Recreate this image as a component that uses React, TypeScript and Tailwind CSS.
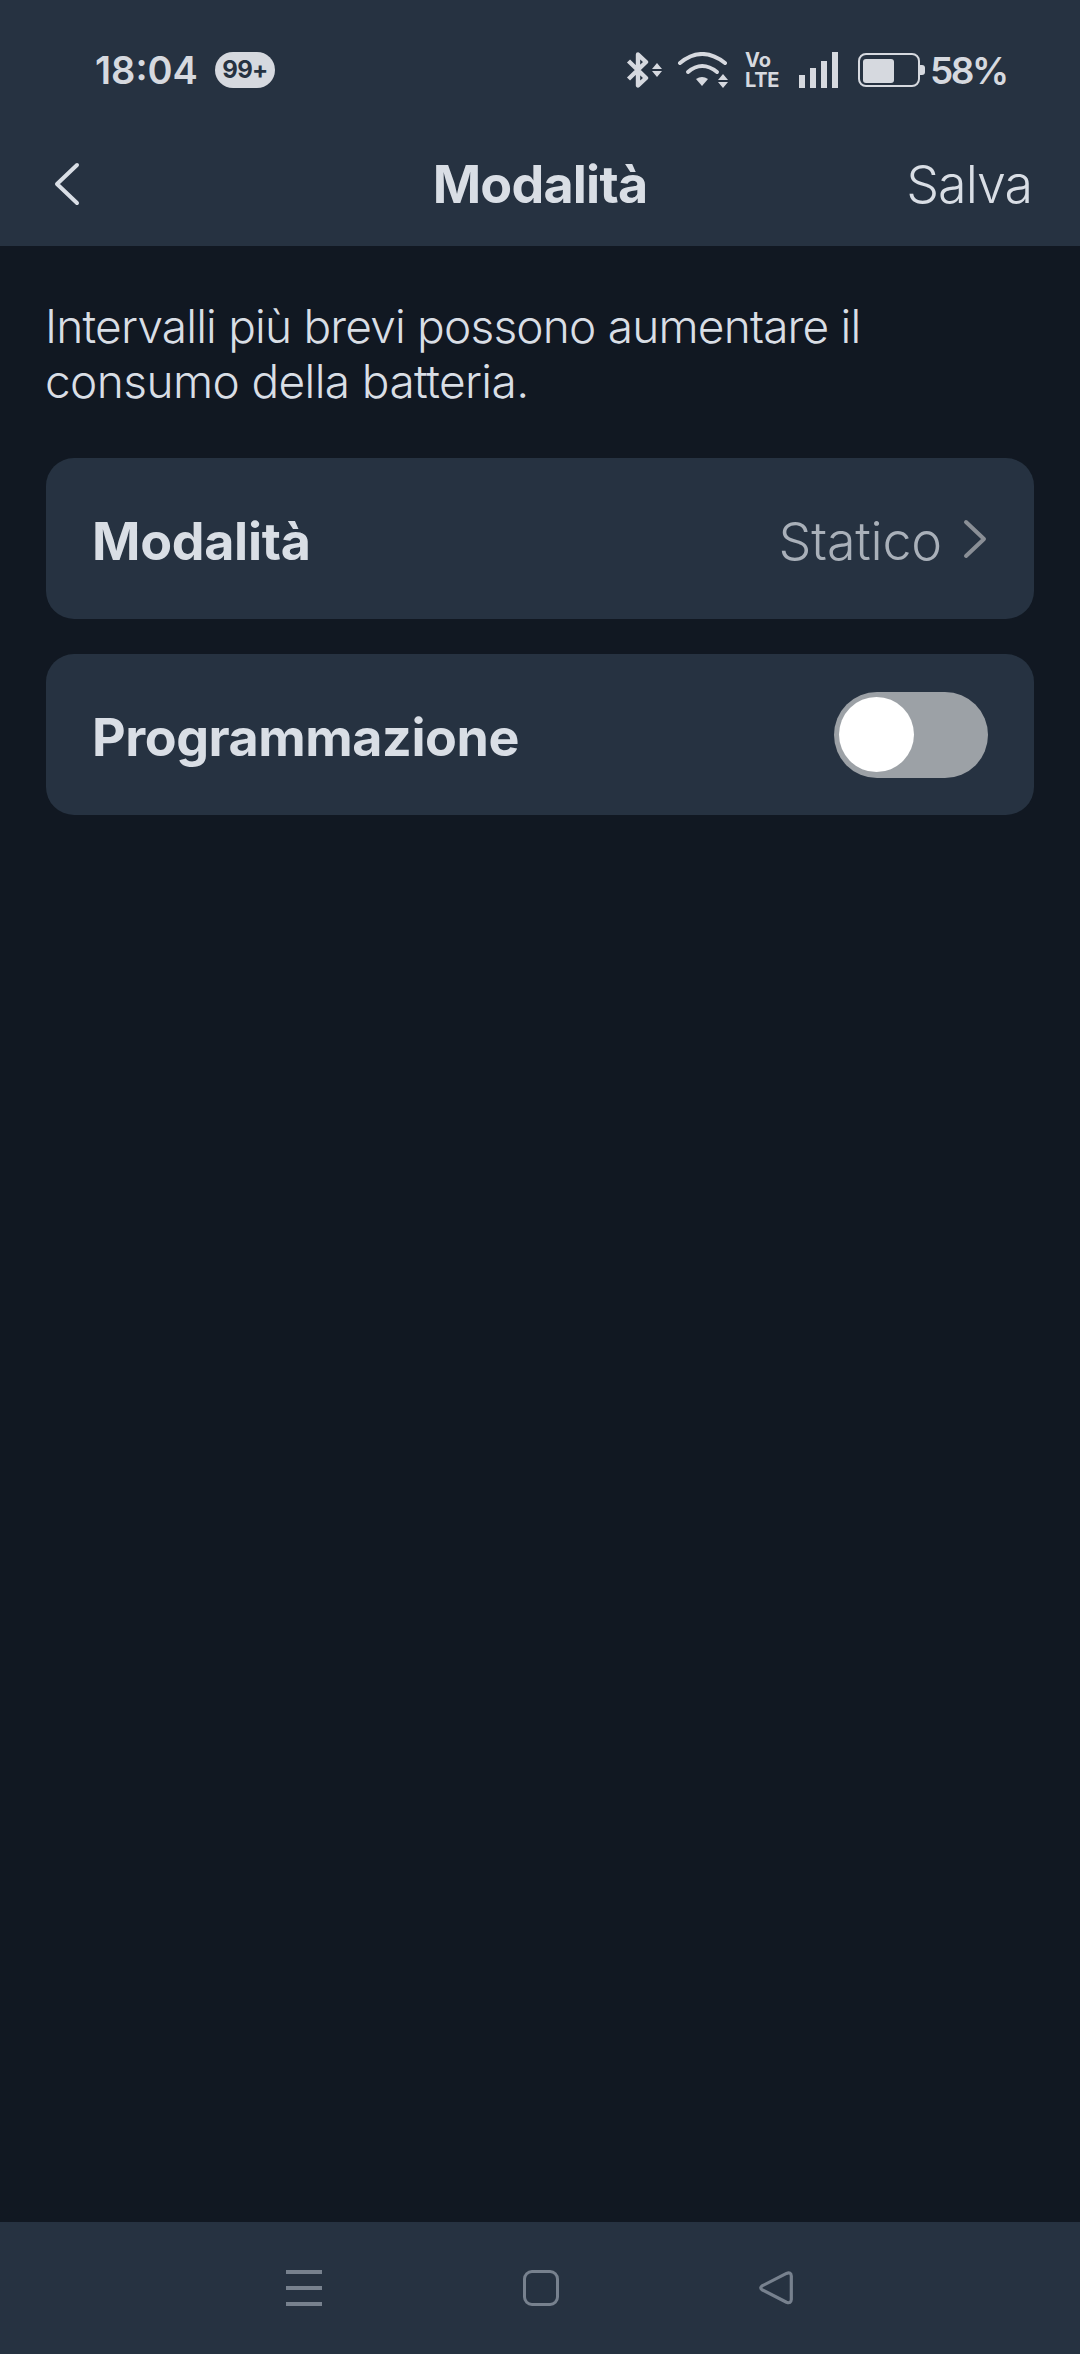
export default function App() {
  return (
    <div className="flex h-[2354px] w-[1080px] flex-col overflow-hidden bg-[#111822] font-['Inter',sans-serif] text-[#d9dee5]">
      <header className="h-[246px] shrink-0 bg-[#263241]">
        <div className="flex h-[140px] items-center justify-between pl-[95px] pr-[73px]">
          <div className="flex items-center gap-[17px]">
            <span className="text-[38px] leading-none font-semibold text-[#d6d9df]">18:04</span>
            <span className="flex h-[36px] w-[60px] items-center justify-center rounded-full bg-[#d6d9df] text-[24px] leading-none font-bold tracking-[-0.8px] text-[#263241]">
              99+
            </span>
          </div>
          <div className="flex items-center">
            <svg width="36" height="36" viewBox="0 0 36 36" fill="none">
              <path d="M2.5 9L20 26L12 33.5V2.5L20 10L2.5 27" stroke="#d6d9df" strokeWidth="4.4" strokeLinejoin="round" />
              <path d="M26 17L31 11L36 17ZM26 19L31 25L36 19Z" fill="#d6d9df" />
            </svg>
            <svg className="ml-[15px]" width="51" height="36" viewBox="0 0 51 36" fill="none">
              <path d="M3 11Q25 -7 48 11" stroke="#d6d9df" strokeWidth="4" strokeLinecap="round" />
              <path d="M11 20Q25 8 40 20" stroke="#d6d9df" strokeWidth="4" strokeLinecap="round" />
              <path d="M19 27L25 34L31 27Q25 23 19 27Z" fill="#d6d9df" />
              <path d="M41 28L46 22L51 28ZM41 30L46 36L51 30Z" fill="#d6d9df" />
            </svg>
            <div className="ml-[17px] flex w-[32px] flex-col text-[20px] leading-[20px] font-bold text-[#d6d9df]">
              <span>Vo</span>
              <span className="tracking-[-0.3px]">LTE</span>
            </div>
            <svg className="ml-[22px]" width="39" height="36" viewBox="0 0 39 36" fill="#d6d9df">
              <rect x="0" y="23" width="6" height="13" />
              <rect x="11" y="16" width="6" height="20" />
              <rect x="22" y="9" width="6" height="27" />
              <rect x="33" y="0" width="6" height="36" />
            </svg>
            <svg className="ml-[20px]" width="67" height="36" viewBox="0 0 67 36" fill="none">
              <rect x="1" y="2" width="60" height="32" rx="7" stroke="#d6d9df" strokeWidth="2" />
              <rect x="5" y="7" width="31" height="24" rx="3" fill="#d6d9df" />
              <path d="M62 13H64Q67 13 67 16V20Q67 23 64 23H62Z" fill="#d6d9df" />
            </svg>
            <span className="ml-[5px] w-[77px] text-[37px] leading-none font-semibold tracking-[-2.5px] text-[#d6d9df]">58%</span>
          </div>
        </div>
        <div className="grid h-[76px] translate-y-[7px] grid-cols-[1fr_auto_1fr] items-center px-[48px]">
          <svg className="ml-[6px] -translate-y-[1px]" width="26" height="44" viewBox="0 0 26 44" fill="none">
            <path d="M23 3L3 22L23 41" stroke="#d9dee5" strokeWidth="4" strokeLinecap="round" strokeLinejoin="round" />
          </svg>
          <h1 className="text-[52px] leading-none font-bold tracking-[-0.8px]">Modalità</h1>
          <span className="text-right text-[52px] leading-none font-light tracking-[-1px]">Salva</span>
        </div>
      </header>

      <main className="flex flex-1 flex-col px-[46px] pt-[53px]">
        <p className="-ml-[1px] text-[46px] leading-[55px] font-light tracking-[-0.8px]">
          Intervalli più brevi possono aumentare il
          <br />
          <span className="tracking-[-0.6px]">consumo della batteria.</span>
        </p>
        <div className="mt-[49px] flex h-[161px] items-center justify-between rounded-[28px] bg-[#263241] pl-[46px] pr-[47px]">
          <span className="translate-y-[3px] text-[52px] leading-none font-bold tracking-[-0.3px]">Modalità</span>
          <div className="flex items-center gap-[21px]">
            <span className="translate-y-[3px] text-[52px] leading-none font-light tracking-[-0.2px] text-[#a9b0b9]">Statico</span>
            <svg width="24" height="40" viewBox="0 0 24 40" fill="none">
              <path d="M3 3L21 20L3 37" stroke="#8a8f96" strokeWidth="4" strokeLinecap="round" strokeLinejoin="round" />
            </svg>
          </div>
        </div>
        <div className="mt-[35px] flex h-[161px] items-center justify-between rounded-[28px] bg-[#263241] pl-[46px] pr-[46px]">
          <span className="translate-y-[3px] text-[52px] leading-none font-bold tracking-[-0.45px]">Programmazione</span>
          <div className="flex h-[86px] w-[154px] items-center rounded-full bg-[#9ca1a6] pl-[5px]">
            <div className="size-[75px] rounded-full bg-white" />
          </div>
        </div>
      </main>

      <nav className="flex h-[132px] shrink-0 items-start bg-[#263241] pl-[286px] pt-[48px]">
        <div className="flex h-[36px] w-[36px] flex-col justify-between">
          <div className="h-[4px] bg-[#77818e]" />
          <div className="h-[4px] bg-[#77818e]" />
          <div className="h-[4px] bg-[#77818e]" />
        </div>
        <div className="ml-[201px] h-[36px] w-[36px] rounded-[9px] border-[3px] border-[#77818e]" />
        <svg className="ml-[199px]" width="36" height="36" viewBox="0 0 36 36" fill="none">
          <path d="M4.5 15.7L28.5 3.4Q33 1.6 33.3 6V29.5Q33 34 28.5 32.2L4.5 20Q1 18 4.5 15.7Z" stroke="#77818e" strokeWidth="3.2" strokeLinejoin="round" />
        </svg>
      </nav>
    </div>
  )
}
